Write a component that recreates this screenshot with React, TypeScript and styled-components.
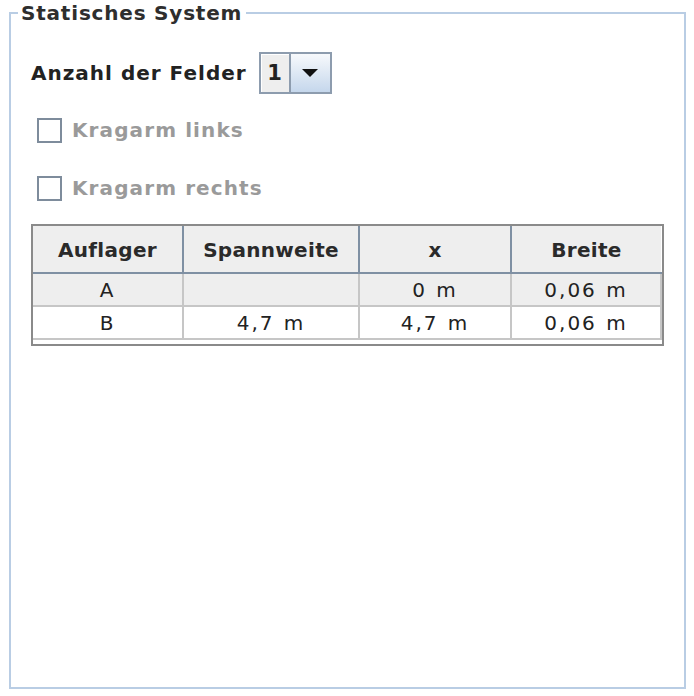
import React from 'react';
import styled, { createGlobalStyle } from 'styled-components';

const GlobalStyle = createGlobalStyle`
  html, body {
    margin: 0;
    padding: 0;
    background: #ffffff;
  }
  body {
    font-family: "DejaVu Sans", "Liberation Sans", sans-serif;
    color: #222222;
  }
`;

interface Auflager {
  name: string;
  spannweite: string;
  x: string;
  breite: string;
}

const rows: Auflager[] = [
  { name: 'A', spannweite: '', x: '0 m', breite: '0,06 m' },
  { name: 'B', spannweite: '4,7 m', x: '4,7 m', breite: '0,06 m' },
];

const App: React.FC = () => {
  return (
    <>
      <GlobalStyle />
      <Frame>
        <Legend>Statisches System</Legend>
        <Content>
          <FelderRow>
            <Label>Anzahl der Felder</Label>
            <Combo>
              <ComboValue>1</ComboValue>
              <ComboButton>
                <Arrow />
              </ComboButton>
            </Combo>
          </FelderRow>

          <CheckRow>
            <CheckBox />
            <CheckLabel>Kragarm links</CheckLabel>
          </CheckRow>
          <CheckRow second>
            <CheckBox />
            <CheckLabel>Kragarm rechts</CheckLabel>
          </CheckRow>

          <TableWrap>
            <Table>
              <colgroup>
                <col style={{ width: 150 }} />
                <col style={{ width: 176 }} />
                <col style={{ width: 152 }} />
                <col />
              </colgroup>
              <thead>
                <tr>
                  <HeadCell>Auflager</HeadCell>
                  <HeadCell>Spannweite</HeadCell>
                  <HeadCell>x</HeadCell>
                  <HeadCell last>Breite</HeadCell>
                </tr>
              </thead>
              <tbody>
                {rows.map((r, i) => (
                  <BodyRow key={r.name} striped={i % 2 === 0}>
                    <Cell>{r.name}</Cell>
                    <Cell>{r.spannweite}</Cell>
                    <Cell>{r.x}</Cell>
                    <Cell last>{r.breite}</Cell>
                  </BodyRow>
                ))}
              </tbody>
            </Table>
          </TableWrap>
        </Content>
      </Frame>
    </>
  );
};

export default App;

// Styled-components
const Frame = styled.fieldset`
  box-sizing: border-box;
  margin: 1px 0 0 9px;
  width: 677px;
  height: 688px;
  padding: 0;
  border: 2px solid #b9cde4;
  min-width: 0;
`;

const Legend = styled.legend`
  margin-left: 7px;
  padding: 0 4px 0 3px;
  font-size: 20px;
  line-height: 24px;
  font-weight: bold;
  letter-spacing: 0.8px;
  color: #2e2e2e;
`;

const Content = styled.div`
  display: flex;
  flex-direction: column;
  padding: 27px 0 0 20px;
`;

const FelderRow = styled.div`
  display: flex;
  align-items: center;
  height: 42px;
  gap: 12px;
`;

const Label = styled.span`
  font-size: 20px;
  font-weight: bold;
  letter-spacing: 1px;
  color: #222222;
`;

const Combo = styled.div`
  display: flex;
  height: 42px;
  box-sizing: border-box;
  border: 2px solid #8d9cae;
`;

const ComboValue = styled.div`
  width: 28px;
  display: flex;
  align-items: center;
  justify-content: center;
  background: #eeeeee;
  border-right: 2px solid #8d9cae;
  font-size: 21px;
  font-weight: bold;
  color: #222222;
  box-shadow: inset 1px 1px 0 #ffffff;
`;

const ComboButton = styled.div`
  width: 39px;
  display: flex;
  align-items: center;
  justify-content: center;
  background: linear-gradient(#f7f9fc, #c5d7ec);
`;

const Arrow = styled.div`
  width: 0;
  height: 0;
  border-left: 8px solid transparent;
  border-right: 8px solid transparent;
  border-top: 8px solid #111111;
`;

const CheckRow = styled.div<{ second?: boolean }>`
  display: flex;
  align-items: center;
  height: 32px;
  gap: 10px;
  margin-top: ${({ second }) => (second ? '26px' : '20px')};
  padding-left: 6px;
`;

const CheckBox = styled.div`
  box-sizing: border-box;
  width: 25px;
  height: 25px;
  border: 2px solid #7e8c9c;
  background: #ffffff;
`;

const CheckLabel = styled.span`
  font-size: 20px;
  font-weight: bold;
  letter-spacing: 1.1px;
  color: #9a9a9a;
`;

const TableWrap = styled.div`
  box-sizing: border-box;
  width: 633px;
  margin-top: 20px;
  border: 2px solid #8a8a8a;
  padding-bottom: 4px;
`;

const Table = styled.table`
  width: 100%;
  border-collapse: collapse;
  table-layout: fixed;
`;

const HeadCell = styled.th<{ last?: boolean }>`
  height: 44px;
  padding: 2px 0 0 0;
  background: #eeeeee;
  border-right: ${({ last }) => (last ? 'none' : '2px solid #7f90a3')};
  border-bottom: 2px solid #7f90a3;
  font-size: 20px;
  font-weight: bold;
  letter-spacing: 0.3px;
  color: #2a2a2a;
  text-align: center;
`;

const BodyRow = styled.tr<{ striped: boolean }>`
  background: ${({ striped }) => (striped ? '#eeeeee' : '#ffffff')};
`;

const Cell = styled.td<{ last?: boolean }>`
  height: 31px;
  padding: 0;
  border-right: 2px solid #c6c6c6;
  border-bottom: 2px solid #c6c6c6;
  font-size: 20px;
  letter-spacing: 2px;
  word-spacing: 1px;
  color: #222222;
  text-align: center;
  line-height: 28px;
`;
